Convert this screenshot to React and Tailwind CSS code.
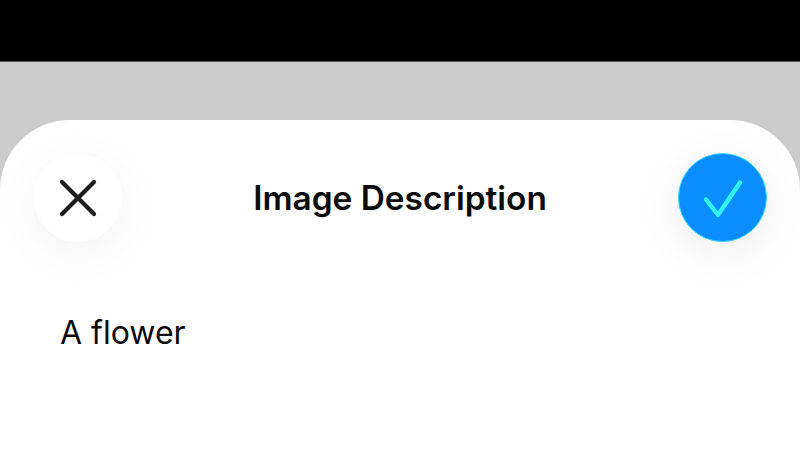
export default function App() {
  return (
    <div className="w-[800px] h-[450px] overflow-hidden flex flex-col bg-[#cccccc] font-['Inter',sans-serif]">
      <div className="h-[62px] bg-black border-b border-[#555] shrink-0" />
      <div className="h-[58px] shrink-0" />
      <div className="flex-1 bg-white rounded-t-[70px] overflow-hidden">
        <div className="flex items-center justify-between pl-[34px] pr-[33px] pt-[33px]">
          <button className="w-[88px] h-[88px] rounded-full bg-white shadow-[0_10px_50px_rgba(0,0,0,0.05)] flex items-center justify-center">
            <svg width="38" height="38" viewBox="0 0 38 38" fill="none" stroke="#1c1c1e" strokeWidth="4.2" strokeLinecap="round">
              <path d="M3 3L35 35" />
              <path d="M35 3L3 35" />
            </svg>
          </button>
          <h1 className="text-[33.4px] leading-[40px] font-semibold text-[#0a0a0a]">Image Description</h1>
          <button className="w-[89px] h-[89px] rounded-full bg-[#0a8eff] border border-[#2fd8ff] shadow-[0_10px_50px_rgba(0,0,0,0.07)] flex items-center justify-center">
            <svg className="ml-[5px]" width="42" height="42" viewBox="0 0 42 42" fill="none" stroke="#30f4ff" strokeWidth="4.4" strokeLinecap="round" strokeLinejoin="round">
              <path d="M2 22.5L14 38L36 5.5" />
            </svg>
          </button>
        </div>
        <p className="pl-[60px] mt-[69px] text-[32px] leading-[44px] text-[#0a0a0a]">A flower</p>
      </div>
    </div>
  );
}
